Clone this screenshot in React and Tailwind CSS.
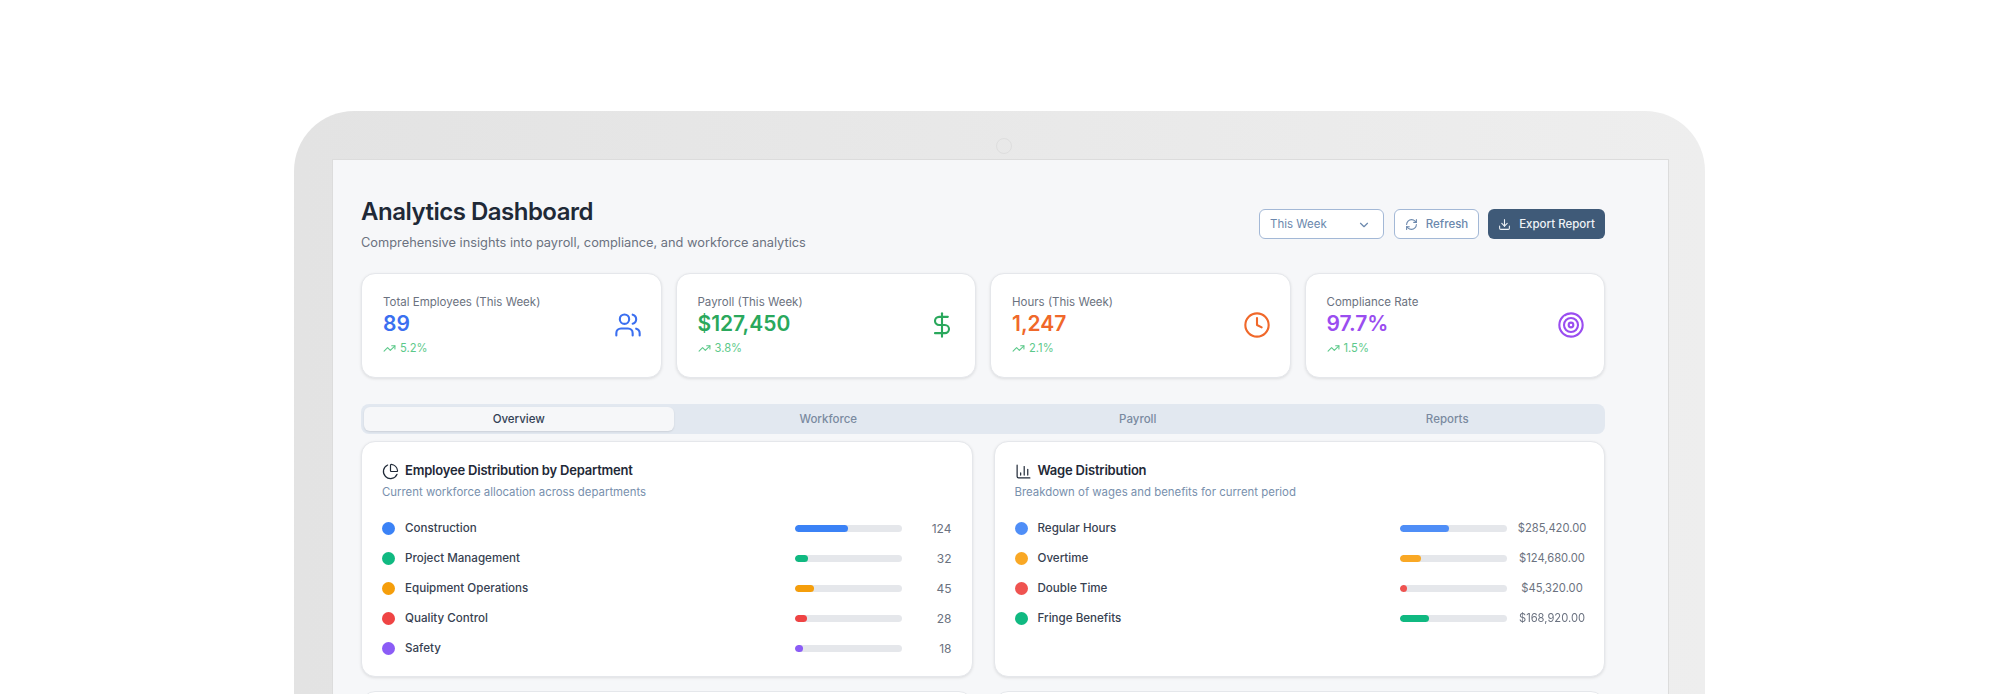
import { Users, DollarSign, Clock, Target, TrendingUp, ChevronDown, RefreshCw, Download, ChartPie, ChartColumn } from 'lucide-react';

const stats = [
  { label: 'Total Employees (This Week)', value: '89', trend: '5.2%', color: 'text-[#3b6ff0]', Icon: Users },
  { label: 'Payroll (This Week)', value: '$127,450', trend: '3.8%', color: 'text-[#2aa85c]', Icon: DollarSign },
  { label: 'Hours (This Week)', value: '1,247', trend: '2.1%', color: 'text-[#f0682a]', Icon: Clock },
  { label: 'Compliance Rate', value: '97.7%', trend: '1.5%', color: 'text-[#9a4df0]', Icon: Target },
];

const departments = [
  { name: 'Construction', dot: 'bg-[#3b82f6]', width: 'w-[50%]', value: '124' },
  { name: 'Project Management', dot: 'bg-[#10b981]', width: 'w-[13%]', value: '32' },
  { name: 'Equipment Operations', dot: 'bg-[#f59e0b]', width: 'w-[18%]', value: '45' },
  { name: 'Quality Control', dot: 'bg-[#ef4444]', width: 'w-[12%]', value: '28' },
  { name: 'Safety', dot: 'bg-[#8b5cf6]', width: 'w-[8%]', value: '18' },
];

const wages = [
  { name: 'Regular Hours', dot: 'bg-[#4f8ef7]', width: 'w-[46%]', value: '$285,420.00' },
  { name: 'Overtime', dot: 'bg-[#f9a825]', width: 'w-[20%]', value: '$124,680.00' },
  { name: 'Double Time', dot: 'bg-[#ef5350]', width: 'w-[7%]', value: '$45,320.00' },
  { name: 'Fringe Benefits', dot: 'bg-[#10b981]', width: 'w-[27%]', value: '$168,920.00' },
];

const Row = ({ row, valueClass }) => (
  <div className="flex items-center h-[30px]">
    <span className={`w-[13px] h-[13px] rounded-full ${row.dot}`}></span>
    <span className="ml-[10px] pt-[1px] flex-1 text-[11.6px] font-medium text-[#374151]">{row.name}</span>
    <div className="w-[107px] h-[7px] rounded-full bg-[#e5e7eb] overflow-hidden">
      <div className={`h-full rounded-full ${row.dot} ${row.width}`}></div>
    </div>
    <span className={`pt-[1px] text-[#6b7280] ${valueClass}`}>{row.value}</span>
  </div>
);

const Panel = ({ Icon, title, subtitle, rows, valueClass }) => (
  <div className="h-[236px] rounded-[14px] bg-white border border-[#e5e7eb] shadow-[0_1px_3px_rgba(0,0,0,0.1)] pt-[19px] pl-[20px] pr-[20px]">
    <div className="flex items-center h-5 gap-[6px]">
      <Icon size={17} strokeWidth={1.7} className="text-[#1f2937]" />
      <h3 className="text-[13px] font-semibold tracking-[-0.2px] text-[#1f2937]">{title}</h3>
    </div>
    <p className="mt-[1px] text-[11.4px] leading-5 text-[#7890ad]">{subtitle}</p>
    <div className="mt-[11px]">
      {rows.map((row) => (
        <Row key={row.name} row={row} valueClass={valueClass} />
      ))}
    </div>
  </div>
);

const App = () => {
  return (
    <div className="h-[694px] overflow-hidden bg-white pt-[111px] pl-[294px] font-['Inter',sans-serif]">
      <div className="relative w-[1411px] h-[600px] rounded-t-[60px] bg-gradient-to-r from-[#e3e3e3] to-[#eeeeee] pt-[48px] pl-[38px] blur-[0.4px]">
        <span className="absolute top-[27px] left-[702px] w-4 h-4 rounded-full border border-[#dedede]"></span>
        <div className="w-[1337px] h-[540px] bg-[#f6f7f9] border-t border-x border-[#dcdcdc] pt-[36px] pl-[28px] pr-[63px]">
          <header className="flex items-start justify-between">
            <div>
              <h1 className="text-[24px] leading-8 font-semibold tracking-[-0.5px] text-[#1f2937]">Analytics Dashboard</h1>
              <p className="mt-[5px] text-[12.8px] leading-5 text-[#6b7280]">
                Comprehensive insights into payroll, compliance, and workforce analytics
              </p>
            </div>
            <div className="flex mt-[13px] text-[11.5px]">
              <div className="w-[125px] h-[30px] pt-[1px] rounded-[6px] bg-white border border-[#a3b8d6] flex items-center justify-between pl-[10px] pr-[12px] text-[#6b88ad]">
                This Week
                <ChevronDown size={14} />
              </div>
              <div className="ml-[10px] w-[85px] h-[30px] pt-[1px] rounded-[6px] bg-white border border-[#a3b8d6] flex items-center justify-center gap-[8px] font-medium text-[#6b88ad]">
                <RefreshCw size={13} />
                Refresh
              </div>
              <div className="ml-[9px] w-[117px] h-[30px] pt-[1px] rounded-[6px] bg-[#3f5a78] flex items-center justify-center gap-[8px] font-medium text-[#eef2f6]">
                <Download size={13} />
                Export Report
              </div>
            </div>
          </header>

          <section className="mt-[20px] grid grid-cols-4 gap-[14px]">
            {stats.map(({ label, value, trend, color, Icon }) => (
              <div key={label} className="h-[105px] rounded-[14px] bg-white border border-[#e5e7eb] shadow-[0_1px_3px_rgba(0,0,0,0.1)] pl-[21px] pr-[19px] pt-[20px] flex justify-between">
                <div>
                  <p className="text-[11.5px] leading-4 text-[#6b7280]">{label}</p>
                  <p className={`mt-[2px] text-[21px] leading-6 font-semibold ${color}`}>{value}</p>
                  <p className="mt-[4px] flex items-center gap-[4px] text-[11.2px] leading-4 text-[#5cc98a]">
                    <TrendingUp size={13} />
                    {trend}
                  </p>
                </div>
                <Icon size={28} strokeWidth={1.8} className={`mt-[17px] ${color}`} />
              </div>
            ))}
          </section>

          <nav className="mt-[26px] h-[30px] rounded-[8px] bg-[#e2e8f0] grid grid-cols-4 p-[3px] text-[11.5px] font-medium text-center text-[#7a8aa0]">
            <div className="rounded-[6px] bg-[#f6f7f9] text-[#334155] leading-[24px] shadow-[0_1px_2px_rgba(0,0,0,0.1)]">Overview</div>
            <div className="leading-[24px]">Workforce</div>
            <div className="leading-[24px]">Payroll</div>
            <div className="leading-[24px]">Reports</div>
          </nav>

          <section className="mt-[7px] grid grid-cols-2 gap-x-[21px] gap-y-[14px]">
            <Panel
              Icon={ChartPie}
              title="Employee Distribution by Department"
              subtitle="Current workforce allocation across departments"
              rows={departments}
              valueClass="w-[50px] text-right text-[12px]"
            />
            <Panel
              Icon={ChartColumn}
              title="Wage Distribution"
              subtitle="Breakdown of wages and benefits for current period"
              rows={wages}
              valueClass="w-[90px] -mr-[13px] text-center text-[11.2px]"
            />
            <div className="h-[235px] rounded-[14px] bg-white border border-[#e5e7eb]"></div>
            <div className="h-[235px] rounded-[14px] bg-white border border-[#e5e7eb]"></div>
          </section>
        </div>
      </div>
    </div>
  );
};

export default App;
